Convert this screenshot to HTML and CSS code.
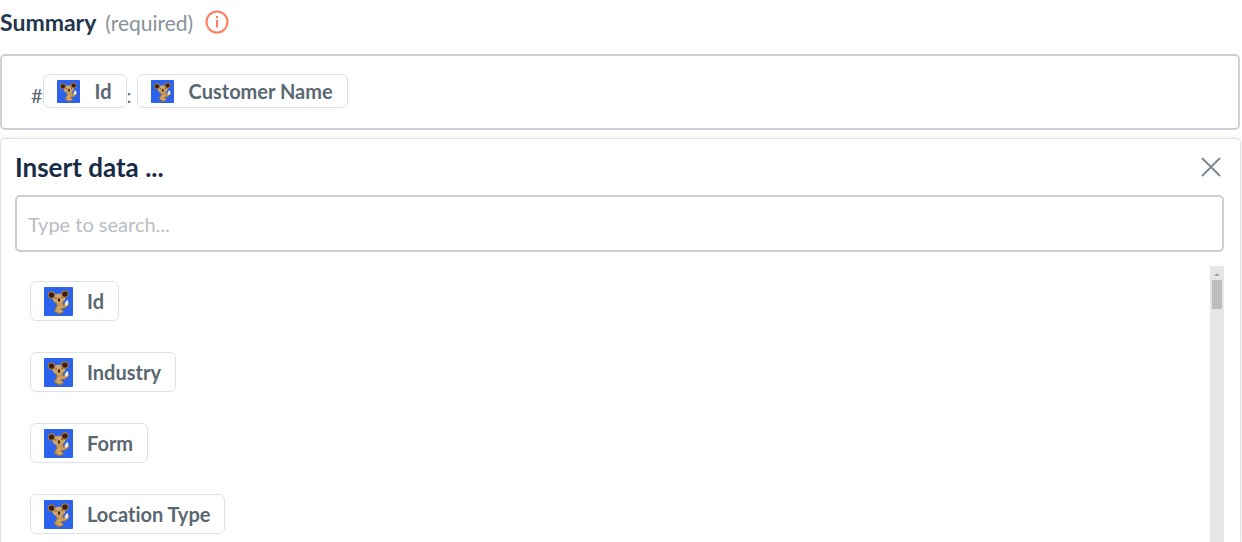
FILE: index.html
```
<!DOCTYPE html>
<html lang="en">
<head>
    <meta charset="UTF-8">
    <meta name="viewport" content="width=device-width, initial-scale=1.0">
    <title>Summary</title>
    <link rel="stylesheet" href="styles.css">
</head>
<body>

<svg class="sprite" aria-hidden="true">
    <symbol id="koala" viewBox="0 0 29 29">
        <rect width="29" height="29" rx="1" fill="#2b63ee"/>
        <path d="M11 13 L19 12 L19 18 L22 17 L24 15 L25 18 L21 21 L17 22 L20 25 L15 27 L10 24 L13 19 Z" fill="#c79a5d" stroke="#8b6b4b" stroke-width="1" stroke-linejoin="round"/>
        <path d="M7 9 Q14 5 22 8 L21 13 Q16 18 10 15 Z" fill="#cfa568"/>
        <circle cx="7.500" cy="8" r="3.800" fill="#a17543"/>
        <circle cx="21" cy="7" r="3.800" fill="#a17543"/>
        <circle cx="7.500" cy="8" r="2.600" fill="#3d1c13"/>
        <circle cx="21" cy="7" r="2.600" fill="#3d1c13"/>
        <ellipse cx="15" cy="13" rx="1.200" ry="2" fill="#4a2816"/>
        <circle cx="12" cy="11" r="0.700" fill="#593719"/>
        <circle cx="18" cy="10.500" r="0.700" fill="#593719"/>
        <path d="M22 14 L24 13 L24.500 17 L22 19 L20.500 17 Z" fill="#e9e8e7"/>
        <path d="M13 21 L17 20 M14 24 L18 24" stroke="#e0b777" stroke-width="1.200"/>
    </symbol>
</svg>

<main class="page">
    <div class="field-label">
        <span class="field-name" id="summaryLabel">Summary</span>
        <span class="field-required">(required)</span>
        <button class="info-button" type="button" aria-label="About this field">
            <svg class="info-icon" viewBox="0 0 24 24" fill="none" stroke="#ff7c5c" stroke-width="2">
                <circle cx="12" cy="12" r="10.500"/>
                <path d="M12 10 V17.500 M12 6 V8.200"/>
            </svg>
        </button>
    </div>

    <div class="summary-box" role="textbox" aria-labelledby="summaryLabel" contenteditable="true" spellcheck="false">
        <span>#</span>
        <span class="chip chip-small" contenteditable="false"><svg class="chip-icon"><use href="#koala"/></svg>Id</span>
        <span class="separator">:</span>
        <span class="chip chip-small" contenteditable="false"><svg class="chip-icon"><use href="#koala"/></svg>Customer Name</span>
    </div>

    <section class="panel">
        <header class="panel-header">
            <h2>Insert data ...</h2>
            <button class="close-button" type="button" aria-label="Close">
                <svg class="close-icon" viewBox="0 0 20 20" fill="none" stroke="#7e8993" stroke-width="2">
                    <path d="M1 1 L19 19 M19 1 L1 19"/>
                </svg>
            </button>
        </header>
        <input class="search" type="text" placeholder="Type to search..." aria-label="Search data">
        <div class="results">
            <div class="options">
                <button class="chip" type="button"><svg class="chip-icon"><use href="#koala"/></svg>Id</button>
                <button class="chip" type="button"><svg class="chip-icon"><use href="#koala"/></svg>Industry</button>
                <button class="chip" type="button"><svg class="chip-icon"><use href="#koala"/></svg>Form</button>
                <button class="chip" type="button"><svg class="chip-icon"><use href="#koala"/></svg>Location Type</button>
            </div>
            <div class="scrollbar" aria-hidden="true">
                <div class="scroll-arrow"></div>
                <div class="scroll-thumb"></div>
            </div>
        </div>
    </section>
</main>

</body>
</html>
```
FILE: styles.css
```
* {
    box-sizing: border-box;
}
body {
    margin: 0;
    font-family: Lato, sans-serif;
    font-size: 20px;
    font-variant-ligatures: none;
    color: #5a6872;
    background: #fff;
}
.sprite {
    display: none;
}
.page {
    display: flex;
    flex-direction: column;
    height: 100vh;
    padding-right: 1px;
    overflow: hidden;
}
.field-label {
    display: flex;
    align-items: center;
    height: 44px;
    margin-bottom: 10px;
    flex-shrink: 0;
}
.field-name {
    font-size: 23px;
    font-weight: bold;
    color: #22364d;
}
.field-required {
    margin-left: 9px;
    font-size: 21px;
    color: #87929b;
}
.info-button,
.close-button {
    display: flex;
    padding: 0;
    border: none;
    background: none;
    cursor: pointer;
}
.info-button {
    margin-left: 12px;
}
.info-icon {
    width: 24px;
    height: 24px;
}
.summary-box {
    display: flex;
    align-items: baseline;
    flex-shrink: 0;
    margin-right: 1px;
    padding: 18px 29px 20px;
    border: 2px solid #cdd1d5;
    border-radius: 5px;
    outline: none;
}
.separator {
    margin-right: 5px;
}
.chip {
    display: inline-flex;
    align-items: center;
    flex-shrink: 0;
    gap: 14px;
    height: 40px;
    padding: 0 14px 0 13px;
    border: 1px solid #dde1e5;
    border-radius: 6px;
    background: #fff;
    font-family: inherit;
    font-size: 20px;
    font-weight: bold;
    font-variant-ligatures: none;
    color: #5a6872;
    cursor: pointer;
}
.chip-icon {
    width: 29px;
    height: 29px;
    flex-shrink: 0;
}
.chip-small {
    gap: 15px;
    height: 34px;
}
.chip-small .chip-icon {
    width: 23px;
    height: 23px;
}
.panel {
    display: flex;
    flex-direction: column;
    flex: 1;
    min-height: 0;
    margin-top: 8px;
    padding: 0 16px 0 14px;
    border: 1px solid #dde1e6;
    border-bottom: none;
    border-radius: 5px 5px 0 0;
    box-shadow: 0 0 4px rgba(0, 0, 0, 0.08);
}
.panel-header {
    display: flex;
    align-items: center;
    justify-content: space-between;
    height: 56px;
    flex-shrink: 0;
}
.panel-header h2 {
    margin: 0;
    font-size: 26px;
    color: #182b47;
}
.close-button {
    margin-right: 3px;
}
.close-icon {
    width: 20px;
    height: 20px;
}
.search {
    width: 100%;
    height: 57px;
    flex-shrink: 0;
    padding: 0 11px;
    border: 2px solid #cbd0d4;
    border-radius: 5px;
    font-family: inherit;
    font-size: 20px;
    color: #5a6872;
    outline: none;
}
.search::placeholder {
    color: #b8bec4;
}
.results {
    display: flex;
    justify-content: space-between;
    flex: 1;
    min-height: 0;
    margin-top: 14px;
}
.options {
    display: flex;
    flex-direction: column;
    align-items: flex-start;
    gap: 31px;
    padding: 15px;
}
.scrollbar {
    display: flex;
    flex-direction: column;
    align-items: center;
    width: 14px;
    background: #e6e6e6;
}
.scroll-arrow {
    width: 0;
    margin: 7px 0 4px;
    border: 3px solid transparent;
    border-top: none;
    border-bottom-color: #a5a5a5;
}
.scroll-thumb {
    width: 10px;
    height: 29px;
    background: #bdbdbd;
}
```
